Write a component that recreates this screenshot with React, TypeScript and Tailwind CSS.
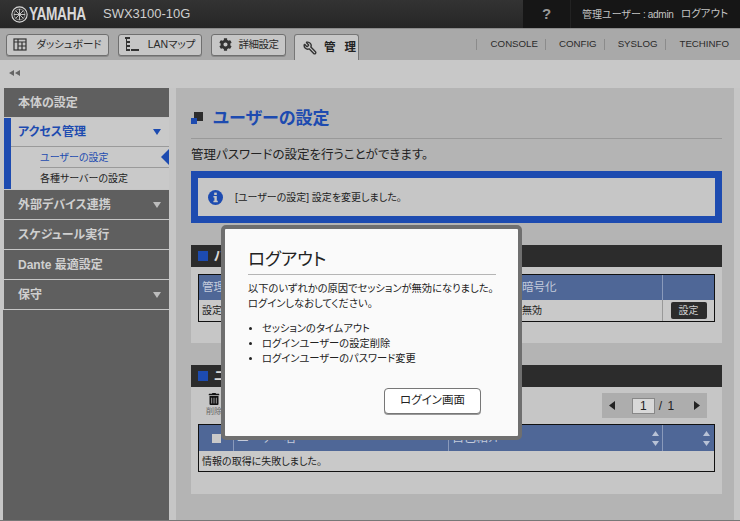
import { Wrench } from "lucide-react";
import { FaCog, FaTrashAlt } from "react-icons/fa";

const FONT = "font-['Liberation_Sans','Noto_Sans_CJK_JP',sans-serif] [font-feature-settings:'palt']";

function YamahaMark() {
  return (
    <svg width="17" height="17" viewBox="0 0 20 20" fill="none" stroke="#d8d8d8" className="shrink-0">
      <circle cx="10" cy="10" r="9" strokeWidth="1.3" />
      <circle cx="10" cy="10" r="6.4" strokeWidth="0.6" />
      <path d="M10 3.5V16.5M3.5 10H16.5M5.4 5.4L14.6 14.6M14.6 5.4L5.4 14.6" strokeWidth="1" />
    </svg>
  );
}

function DashIcon() {
  return (
    <svg width="14" height="13" viewBox="0 0 14 13" fill="none" stroke="#333" strokeWidth="1.2">
      <rect x="1" y="1" width="12" height="11" />
      <path d="M1 4H13M5 1V12M9 4V12M5 8H13" />
    </svg>
  );
}

function MapIcon() {
  return (
    <svg width="14" height="16" viewBox="0 0 14 16" fill="#333">
      <rect x="0" y="0" width="5" height="2" />
      <rect x="1" y="2" width="1" height="12" />
      <rect x="2" y="4" width="3" height="2" />
      <rect x="2" y="8" width="3" height="2" />
      <rect x="2" y="12" width="3" height="2" />
      <rect x="6" y="12" width="8" height="2" />
    </svg>
  );
}

function Caret({ color }: { color: string }) {
  return (
    <svg width="8" height="6" viewBox="0 0 8 6">
      <path d="M0 0H8L4 6Z" fill={color} />
    </svg>
  );
}

function NavTab({ icon, label, width, extra }: { icon: React.ReactNode; label: string; width: string; extra: string }) {
  return (
    <button className={`${width} ${extra} h-[22px] flex items-center justify-center rounded-[3px] border border-[#6f6f6f] bg-[#c6c6c6] text-[10.5px] text-[#2a2a2a] whitespace-nowrap shadow-[0_1px_0_#8a8a8a]`}>
      {icon}
      <span>{label}</span>
    </button>
  );
}

function SideItem({ label, caret }: { label: string; caret?: boolean }) {
  return (
    <div className="h-[29px] mb-px flex items-center justify-between pl-[14px] pr-[8px] bg-[#5f5f5f] text-[12px] font-bold text-[#cfcfcf]">
      <span>{label}</span>
      {caret && <Caret color="#bdbdbd" />}
    </div>
  );
}

function PanelHead({ label }: { label: string }) {
  return (
    <div className="h-[22px] flex items-center bg-[#2c2c2c] pl-[7px] gap-[6px]">
      <span className="w-[10px] h-[10px] bg-[#1d4bb0]" />
      <span className="text-[13px] font-bold text-[#d8d8d8]">{label}</span>
    </div>
  );
}

function Sort() {
  return (
    <div className="flex flex-col gap-[5px] items-center">
      <svg width="7" height="5" viewBox="0 0 7 5"><path d="M3.5 0L7 5H0Z" fill="#b8c2d6" /></svg>
      <svg width="7" height="5" viewBox="0 0 7 5"><path d="M0 0H7L3.5 5Z" fill="#b8c2d6" /></svg>
    </div>
  );
}

export default function App() {
  return (
    <div className={`${FONT} relative w-[740px] h-[521px] overflow-hidden bg-[#c6c6c6] flex flex-col border-b border-[#777]`}>
      <header className="h-[28px] shrink-0 flex bg-gradient-to-b from-[#333333] to-[#262626]">
        <div className="flex-1 flex items-center pl-[11px]">
          <YamahaMark />
          <span className="w-[61px] ml-px text-[19px] font-bold text-[#d8d8d8] scale-x-[0.72] origin-left tracking-tight">YAMAHA</span>
          <span className="ml-[13px] text-[13px] text-[#cfcfcf]">SWX3100-10G</span>
        </div>
        <div className="w-[217px] flex items-center bg-[#161616] text-[#c4c4c4] whitespace-nowrap">
          <span className="w-[47px] text-center text-[15px] font-bold text-[#999]">?</span>
          <span className="w-[111px] pl-[11px] border-l border-[#222] h-full flex items-center text-[10px]">
            管理ユーザー<span className="ml-[2px] tracking-[-0.3px]">: admin</span>
          </span>
          <span className="text-[10.5px]">ログアウト</span>
        </div>
      </header>

      <div className="h-[32px] shrink-0 flex justify-between bg-[#a9a9a9] border-t border-[#8b8b8b] pl-[6px]">
        <div className="flex items-center gap-[9px] h-full">
          <NavTab width="w-[103px]" extra="gap-[9px]" icon={<DashIcon />} label="ダッシュボード" />
          <NavTab width="w-[84px]" extra="gap-[9px]" icon={<MapIcon />} label="LANマップ" />
          <NavTab width="w-[75px]" extra="gap-[7px] tracking-[-0.5px]" icon={<FaCog size={13} color="#333" />} label="詳細設定" />
          <div className="w-[65px] h-[26px] self-end -ml-px flex items-center pl-[8px] gap-[7px] rounded-t-[3px] border border-b-0 border-[#777] bg-[#c8c8c8] text-[11.5px] font-bold text-[#222]">
            <Wrench size={14} stroke="#333" strokeWidth={2.4} className="-scale-x-100 shrink-0" />
            <span className="tracking-[9px] whitespace-nowrap">管理</span>
          </div>
        </div>
        <div className="flex items-center h-full text-[9.7px] text-[#2a2a2a] pr-[11px]">
          <span className="border-l border-[#8b8b8b] pl-[14px] pr-[7px] h-[11px] flex items-center">CONSOLE</span>
          <span className="border-l border-[#8b8b8b] pl-[13px] pr-[7px] h-[11px] flex items-center">CONFIG</span>
          <span className="border-l border-[#8b8b8b] pl-[13px] pr-[8px] h-[11px] flex items-center">SYSLOG</span>
          <span className="border-l border-[#8b8b8b] pl-[13px] h-[11px] flex items-center">TECHINFO</span>
        </div>
      </div>

      <div className="h-[28px] shrink-0 flex items-center pl-[9px] pb-[3px] bg-[#c8c8c8]">
        <svg width="11" height="6" viewBox="0 0 11 6" fill="#666">
          <path d="M5 0V6L0 3ZM11 0V6L6 3Z" />
        </svg>
      </div>

      <div className="flex-1 flex min-h-0">
        <aside className="w-[166px] ml-[3px] shrink-0 flex flex-col bg-[#5f5f5f]">
          <div className="bg-[#c6c6c6] pl-px">
            <SideItem label="本体の設定" />
            <div className="bg-[#c9c9c9] border-l-[7px] border-[#1d4bb0] mb-px">
              <div className="h-[29px] flex items-center justify-between pl-[7px] pr-[8px] border-b border-[#9a9a9a] text-[12px] font-bold text-[#1d4bb0]">
                <span>アクセス管理</span>
                <Caret color="#1d4bb0" />
              </div>
              <div className="relative ml-[29px] h-[21px] flex items-center border-b border-[#9a9a9a] text-[10px] text-[#1d4bb0]">
                <span>ユーザーの設定</span>
                <span className="absolute right-0 top-[2px] w-0 h-0 border-y-[8px] border-y-transparent border-r-[8px] border-r-[#1d4bb0]" />
              </div>
              <div className="ml-[29px] h-[21px] flex items-center text-[10px] text-[#222]">各種サーバーの設定</div>
            </div>
            <SideItem label="外部デバイス連携" caret />
            <SideItem label="スケジュール実行" />
            <SideItem label="Dante 最適設定" />
            <SideItem label="保守" caret />
          </div>
        </aside>

        <main className="ml-[7px] w-[558px] shrink-0 bg-[#b4b4b4] pl-[15px] pr-[12px] pt-[18px] min-w-0">
          <div className="flex items-center gap-[10px] h-[24px]">
            <span className="relative w-[12px] h-[12px] block shrink-0">
              <span className="absolute right-0 top-0 w-[9px] h-[9px] bg-[#2c2c2c]" />
              <span className="absolute left-0 bottom-0 w-[6px] h-[6px] bg-[#1d4bb0]" />
            </span>
            <h1 className="text-[17px] font-bold text-[#1d4bb0] pt-px">ユーザーの設定</h1>
          </div>
          <div className="mt-[8px] border-t border-[#999]" />
          <p className="mt-[7px] text-[12.5px] leading-[18px] text-[#222]">管理パスワードの設定を行うことができます。</p>
          <div className="mt-[7px] h-[52px] border-[7px] border-[#1d4bb0] bg-[#c6c6c6] flex items-center pl-[10px] gap-[12px]">
            <svg width="15" height="15" viewBox="0 0 15 15">
              <circle cx="7.5" cy="7.5" r="7.5" fill="#1d4bb0" />
              <rect x="6.2" y="2.6" width="2.6" height="2.4" fill="#c6c6c6" />
              <path d="M5.4 6H8.8V10.8H9.8V12.2H5.4V10.8H6.4V7.4H5.4Z" fill="#c6c6c6" />
            </svg>
            <span className="text-[10px] text-[#222]">[ユーザーの設定] 設定を変更しました。</span>
          </div>

          <section className="mt-[22px] h-[98px] bg-[#c6c6c6] pb-px">
            <PanelHead label="パスワード" />
            <div className="mx-[7px] mt-[7px] border border-[#111]">
              <div className="h-[25px] flex bg-[#4f6797] text-[11.5px] text-[#c4cbdb]">
                <div className="w-[320px] pl-[3px] flex items-center">管理パスワード</div>
                <div className="flex-1 pl-[3px] flex items-center">暗号化</div>
                <div className="w-[52px] border-l border-[#8a9abb]" />
              </div>
              <div className="h-[21px] flex bg-[#c9c9c9] text-[10px] text-[#222]">
                <div className="w-[320px] pl-[3px] flex items-center">設定済み</div>
                <div className="flex-1 pl-[3px] flex items-center">無効</div>
                <div className="w-[52px] border-l border-[#999] flex items-center justify-center">
                  <span className="w-[36px] h-[17px] rounded-[2px] bg-[#2c2c2c] text-[#cfcfcf] flex items-center justify-center">設定</span>
                </div>
              </div>
            </div>
          </section>

          <section className="mt-[22px] h-[129px] bg-[#c6c6c6]">
            <PanelHead label="ユーザー" />
            <div className="h-[25px] mt-[6px] flex justify-between pl-[15px] pr-[15px]">
              <div className="w-[16px] flex flex-col items-center gap-[2px] text-[8px] leading-[9px] text-[#666]">
                <FaTrashAlt size={12} color="#111" />
                <span className="whitespace-nowrap">削除</span>
              </div>
              <div className="w-[105px] flex items-center justify-between px-[7px] bg-[#adadad] text-[12px] text-[#222]">
                <svg width="6" height="9" viewBox="0 0 6 9"><path d="M6 0V9L0 4.5Z" fill="#222" /></svg>
                <span className="flex items-center gap-[4px] -ml-[2px]">
                  <span className="w-[23px] h-[16px] border border-[#888] bg-[#d8d8d8] text-center text-[#222] leading-[14px]">1</span>
                  <span className="tracking-[1px]">/ 1</span>
                </span>
                <svg width="6" height="9" viewBox="0 0 6 9"><path d="M0 0L6 4.5L0 9Z" fill="#222" /></svg>
              </div>
            </div>
            <div className="mx-[7px] mt-[6px] border border-[#111]">
              <div className="h-[26px] flex bg-[#4f6797] text-[12px] text-[#c4cbdb]">
                <div className="w-[34px] flex items-center justify-center">
                  <span className="w-[9px] h-[9px] bg-[#c9c9c9]" />
                </div>
                <div className="w-[215px] flex items-center pl-[3px] border-l border-[#8a9abb]">ユーザー名</div>
                <div className="flex-1 flex items-center justify-between pl-[3px] pr-[3px] border-l border-[#8a9abb]">
                  <span>自己紹介</span>
                  <Sort />
                </div>
                <div className="w-[52px] border-l border-[#8a9abb] flex items-center justify-end pr-[4px]">
                  <Sort />
                </div>
              </div>
              <div className="h-[20px] flex items-center pl-[3px] bg-[#c9c9c9] text-[10px] text-[#222]">情報の取得に失敗しました。</div>
            </div>
          </section>
        </main>
      </div>

      {/* session-expired dialog */}
      <div className="absolute left-[221px] top-[225px] w-[301px] h-[215px] rounded-[5px] border-[4px] border-[#6f6f6f] bg-[#fafafa] pl-[23px] pr-[22px] pt-[18px]">
        <h2 className="text-[17.5px] leading-[24px] text-[#222]">ログアウト</h2>
        <div className="mt-[3px] border-t border-[#b5b5b5]" />
        <p className="mt-[6px] text-[10.25px] leading-[15px] text-[#222] whitespace-nowrap">
          以下のいずれかの原因でセッションが無効になりました。
          <br />
          ログインしなおしてください。
        </p>
        <ul className="mt-[10px] pl-[14px] list-disc text-[10.25px] leading-[15px] text-[#222]">
          <li>セッションのタイムアウト</li>
          <li>ログインユーザーの設定削除</li>
          <li>ログインユーザーのパスワード変更</li>
        </ul>
        <div className="mt-[22px] flex justify-end pr-[15px]">
          <button className="w-[97px] h-[26px] rounded-[4px] border border-[#777] bg-white shadow-[0_1px_0_#999] text-[11.5px] text-[#222]">ログイン画面</button>
        </div>
      </div>
    </div>
  );
}
